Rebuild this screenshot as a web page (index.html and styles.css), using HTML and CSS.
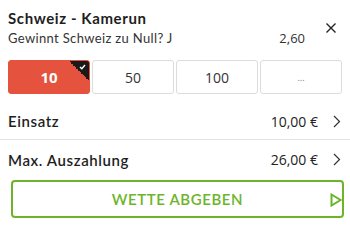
FILE: index.html
```html
<!DOCTYPE html>
<html lang="de">
<head>
<meta charset="utf-8">
<link rel="stylesheet" href="styles.css">
</head>
<body>
<div class="slip">
  <div class="head">
    <div class="head-main">
      <div class="title">Schweiz - Kamerun</div>
      <div class="sub">
        <span class="market">Gewinnt Schweiz zu Null? J</span>
        <span class="odds">2,60</span>
      </div>
    </div>
    <div class="close">
      <svg width="12" height="12" viewBox="0 0 12 12"><path d="M1.5 1.5 L10.5 10.5 M10.5 1.5 L1.5 10.5" stroke="#222" stroke-width="1.4" fill="none"/></svg>
    </div>
  </div>
  <div class="stakes">
    <div class="tile active">10
      <span class="corner"><svg width="7" height="6" viewBox="0 0 7 6"><path d="M1 3 L2.8 4.8 L6 1" stroke="#fff" stroke-width="1.4" fill="none"/></svg></span>
    </div>
    <div class="tile">50</div>
    <div class="tile">100</div>
    <div class="tile dots">...</div>
  </div>
  <div class="row">
    <span class="label">Einsatz</span>
    <span class="value">10,00 €</span>
    <svg class="chev" width="8" height="13" viewBox="0 0 8 13"><path d="M1 1 L6.5 6.5 L1 12" stroke="#333" stroke-width="1.2" fill="none"/></svg>
  </div>
  <div class="row last">
    <span class="label">Max. Auszahlung</span>
    <span class="value">26,00 €</span>
    <svg class="chev" width="8" height="13" viewBox="0 0 8 13"><path d="M1 1 L6.5 6.5 L1 12" stroke="#333" stroke-width="1.2" fill="none"/></svg>
  </div>
  <div class="btn-wrap">
    <div class="btn">
      <span class="btn-text">WETTE ABGEBEN</span>
      <svg class="play" width="12" height="14" viewBox="0 0 12 14"><path d="M1.5 1.5 L10.5 7 L1.5 12.5 Z" stroke="#6cb52a" stroke-width="2" fill="none" stroke-linejoin="miter"/></svg>
    </div>
  </div>
</div>
</body>
</html>
```

FILE: styles.css
```css
* { box-sizing: border-box; }
html, body { margin: 0; padding: 0; background: #fff; }
body {
  width: 350px;
  height: 225px;
  overflow: hidden;
  font-family: Lato, "Open Sans", sans-serif;
  color: #222;
}
.slip { display: flex; flex-direction: column; }
.head {
  display: flex;
  align-items: center;
  padding: 8px 13px 0 8px;
}
.head-main { flex: 1; }
.title {
  font-size: 15px;
  line-height: 20px;
  font-weight: 700;
  color: #1e1e1e;
  letter-spacing: 0.6px;
}
.sub {
  display: flex;
  justify-content: space-between;
  font-size: 13px;
  line-height: 18px;
  color: #333;
  margin-top: 1px;
}
.market { letter-spacing: 0.35px; }
.odds {
  font-family: "Open Sans", sans-serif;
  font-size: 13px;
  padding-right: 20px;
}
.close { width: 12px; height: 12px; display: flex; }
.stakes {
  display: grid;
  grid-template-columns: repeat(4, 1fr);
  gap: 2px;
  padding: 0 8px;
  margin-top: 13px;
}
.tile {
  position: relative;
  height: 34px;
  border: 1px solid #dcdcdc;
  border-radius: 3px;
  display: flex;
  align-items: center;
  justify-content: center;
  font-family: "Open Sans", sans-serif;
  font-size: 14px;
  color: #333;
  overflow: hidden;
}
.tile.active {
  background: #e5533e;
  border-color: #e5533e;
  color: #fff;
  font-weight: 700;
  font-size: 15px;
}
.tile.dots { font-size: 9px; color: #777; }
.corner {
  position: absolute;
  top: 0;
  right: 0;
  width: 20px;
  height: 20px;
  background: linear-gradient(to bottom left, #1a1a1a 50%, transparent 50%);
}
.corner svg { position: absolute; top: 3px; right: 3px; }
.row {
  display: flex;
  align-items: center;
  height: 37px;
  padding: 0 8px;
  border-bottom: 1px solid #e4e4e4;
  margin-top: 9px;
}
.row.last { border-bottom: none; margin-top: 0; height: 39px; }
.label {
  flex: 1;
  font-size: 15px;
  font-weight: 600;
  color: #1e1e1e;
  letter-spacing: 0.6px;
}
.value {
  font-family: "Open Sans", sans-serif;
  font-size: 14px;
  color: #222;
  margin-right: 15px;
}
.chev { margin-right: 1px; }
.btn-wrap { padding: 0 6px 0 11px; margin-top: 1px; }
.btn {
  position: relative;
  height: 38px;
  border: 2px solid #6cb52a;
  border-radius: 4px;
  display: flex;
  align-items: center;
  justify-content: center;
}
.btn-text {
  font-size: 15px;
  font-weight: 600;
  color: #6cb52a;
  letter-spacing: 0.6px;
}
.play { position: absolute; right: 0; top: 11px; }
```
